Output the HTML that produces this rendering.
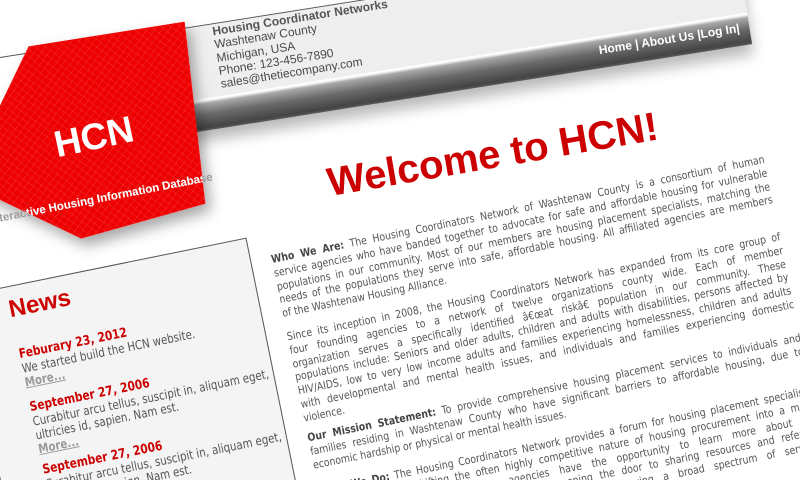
<!DOCTYPE html>
<html><head><meta charset="utf-8">
<style>
html,body{margin:0;padding:0;width:800px;height:480px;overflow:hidden;}
body{background:#fff;position:relative;font-family:"Liberation Sans",Arial,sans-serif;}
.frame{position:absolute;transform-origin:0 0;}
.abs{position:absolute;white-space:nowrap;}
#hdr{left:0;top:58px;transform:rotate(-9deg);}
#cnt{left:272px;top:263px;transform:rotate(-11.5deg);}
.band{position:absolute;left:60px;top:0;width:685px;height:104px;
 background:linear-gradient(to bottom,#efefef 0,#eeeeee 72px,#ffffff 72px,#fafafa 74px,#a8a8a8 77px,#6a6a6a 88px,#444 101px,#5a5a5a 104px);
 box-shadow:0 10px 14px rgba(0,0,0,.28);}
.topline{position:absolute;left:-120px;top:-1px;width:865px;height:1px;background:#555;}
.contact{position:absolute;left:214px;top:1px;font-size:12px;line-height:13.3px;color:#4a4a4a;white-space:nowrap;}
.contact b{color:#555;}
.menu{position:absolute;left:585px;top:79px;width:150px;text-align:right;font-size:12px;font-weight:bold;color:#fff;white-space:nowrap;}
.p{position:absolute;left:0;width:592px;font-family:"DejaVu Sans",Verdana,sans-serif;font-size:11px;line-height:13.8px;color:#555;transform-origin:0 0;transform:scaleX(0.85);}
.p div{text-align:justify;text-align-last:justify;white-space:nowrap;}
.p div.l{text-align-last:left;}
.p b{color:#444;}
h1{position:absolute;margin:0;left:70px;top:-87px;font-size:40px;line-height:40px;color:#cc0000;font-weight:bold;white-space:nowrap;transform-origin:0 34px;transform:rotate(1.7deg);}
.news{position:absolute;left:-310px;top:-30px;width:288px;height:400px;background:#f4f4f4;border:1px solid #555;}
.nt{position:absolute;left:-267px;top:-20px;font-size:24px;font-weight:bold;color:#cc0000;}
.ni{position:absolute;left:-266px;font-family:"DejaVu Sans",Verdana,sans-serif;font-size:12.5px;line-height:14px;color:#555;white-space:nowrap;transform-origin:0 0;transform:scaleX(0.82);}
.ni .d{color:#cc0000;font-weight:bold;font-size:13px;}
.ni .m{color:#999;font-weight:bold;text-decoration:underline;}
</style></head>
<body>
<div id="hdr" class="frame">
  <div class="topline"></div>
  <div class="band"></div>
  <div class="contact"><b>Housing Coordinator Networks</b><br>Washtenaw County<br>Michigan, USA<br>Phone: 123-456-7890<br>sales@thetiecompany.com</div>
  <div class="menu">Home | About Us |Log In|</div>
  <svg class="abs" style="left:-100px;top:-20px" width="340" height="240" viewBox="-100 -20 340 240">
    <defs>
      <pattern id="g" width="6" height="6" patternUnits="userSpaceOnUse" patternTransform="rotate(45)">
        <path d="M0 0H6M0 0V6" stroke="rgba(255,255,255,0.18)" stroke-width="1" fill="none"/>
      </pattern>
      <clipPath id="pc"><polygon points="30,-7 188,-7 180,176 52,191 -56,117"/></clipPath>
      <filter id="sh" x="-20%" y="-20%" width="150%" height="150%"><feDropShadow dx="4" dy="8" stdDeviation="7" flood-color="#000" flood-opacity="0.35"/></filter>
    </defs>
    <polygon points="30,-7 188,-7 180,176 52,191 -56,117" fill="#ee0000" filter="url(#sh)"/>
    <polygon points="30,-7 188,-7 180,176 52,191 -56,117" fill="url(#g)"/>
    <text x="-36" y="162" transform="rotate(-2 -36 162)" font-family="Liberation Sans, Arial, sans-serif" font-size="11.5" font-weight="bold" fill="#9a9a9a">Interactive Housing Information Database</text>
    <g clip-path="url(#pc)">
      <text x="-36" y="162" transform="rotate(-2 -36 162)" font-family="Liberation Sans, Arial, sans-serif" font-size="11.5" font-weight="bold" fill="#fff">Interactive Housing Information Database</text>
    </g>
    <text x="41" y="107" transform="rotate(-3 41 107)" font-family="Liberation Sans, Arial, sans-serif" font-size="37" font-weight="bold" fill="#fff">HCN</text>
  </svg>
</div>

<div id="cnt" class="frame">
  <h1>Welcome to HCN!</h1>
  <div class="news"></div>
  <div class="nt">News</div>
  <div class="ni" style="top:32px"><span class="d">Feburary 23, 2012</span><br>We started build the HCN website.<br><span class="m">More...</span></div>
  <div class="ni" style="top:86px"><span class="d">September 27, 2006</span><br>Curabitur arcu tellus, suscipit in, aliquam eget,<br>ultricies id, sapien. Nam est.<br><span class="m">More...</span></div>
  <div class="ni" style="top:150px"><span class="d">September 27, 2006</span><br>Curabitur arcu tellus, suscipit in, aliquam eget,<br>ultricies id, sapien. Nam est.<br><span class="m">More...</span></div>

  <div class="p" style="top:-10px">
    <div><b>Who We Are:</b> The Housing Coordinators Network of Washtenaw County is a consortium of human</div>
    <div>service agencies who have banded together to advocate for safe and affordable housing for vulnerable</div>
    <div>populations in our community. Most of our members are housing placement specialists, matching the</div>
    <div>needs of the populations they serve into safe, affordable housing. All affiliated agencies are members</div>
    <div class="l">of the Washtenaw Housing Alliance.</div>
  </div>
  <div class="p" style="top:69px">
    <div>Since its inception in 2008, the Housing Coordinators Network has expanded from its core group of</div>
    <div>four founding agencies to a network of twelve organizations county wide. Each of member</div>
    <div>organization serves a specifically identified â€œat riskâ€ population in our community. These</div>
    <div>populations include: Seniors and older adults, children and adults with disabilities, persons affected by</div>
    <div>HIV/AIDS, low to very low income adults and families experiencing homelessness, children and adults</div>
    <div>with developmental and mental health issues, and individuals and families experiencing domestic</div>
    <div class="l">violence.</div>
  </div>
  <div class="p" style="top:172px">
    <div><b>Our Mission Statement:</b> To provide comprehensive housing placement services to individuals and</div>
    <div>families residing in Washtenaw County who have significant barriers to affordable housing, due to</div>
    <div class="l">economic hardship or physical or mental health issues.</div>
  </div>
  <div class="p" style="top:226px">
    <div><b>What We Do:</b> The Housing Coordinators Network provides a forum for housing placement specialists</div>
    <div>to come together, shifting the often highly competitive nature of housing procurement into a more</div>
    <div>collaborative process. Participating agencies have the opportunity to learn more about the</div>
    <div>services offered by other member agencies, opening the door to sharing resources and referrals</div>
    <div>when one agency could meet the need of another serving a broad spectrum of services</div>
    <div class="l">with many advantages.</div>
  </div>
</div>
</body></html>
